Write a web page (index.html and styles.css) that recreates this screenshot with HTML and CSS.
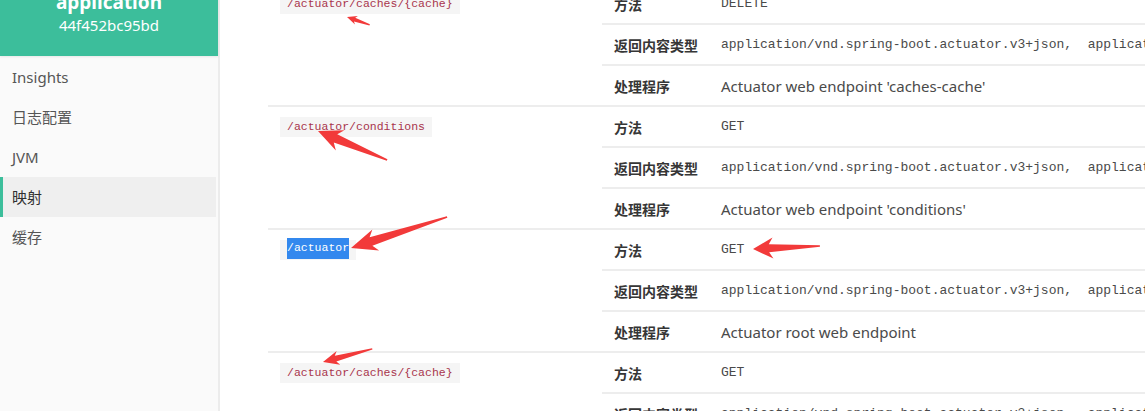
FILE: index.html
```html
<!DOCTYPE html>
<html lang="zh">
<head>
<meta charset="utf-8">
<title>映射</title>
<link rel="stylesheet" href="styles.css">
</head>
<body>
<div class="app">
  <aside class="sidebar">
    <div class="sidebar-header">
      <div class="app-name">application</div>
      <div class="app-id">44f452bc95bd</div>
    </div>
    <nav class="nav">
      <a class="nav-item">Insights</a>
      <a class="nav-item">日志配置</a>
      <a class="nav-item">JVM</a>
      <a class="nav-item is-active">映射</a>
      <a class="nav-item">缓存</a>
    </nav>
  </aside>
  <main class="main">
    <table class="mappings">
      <tbody>
        <tr>
          <td class="path" rowspan="3"><code class="pill">/actuator/caches/{cache}</code></td>
          <th class="label">方法</th>
          <td class="value mono">DELETE</td>
        </tr>
        <tr>
          <th class="label">返回内容类型</th>
          <td class="value mono">application/vnd.spring-boot.actuator.v3+json,&nbsp; application/json</td>
        </tr>
        <tr>
          <th class="label">处理程序</th>
          <td class="value">Actuator web endpoint 'caches-cache'</td>
        </tr>

        <tr>
          <td class="path" rowspan="3"><code class="pill">/actuator/conditions</code></td>
          <th class="label">方法</th>
          <td class="value mono">GET</td>
        </tr>
        <tr>
          <th class="label">返回内容类型</th>
          <td class="value mono">application/vnd.spring-boot.actuator.v3+json,&nbsp; application/json</td>
        </tr>
        <tr>
          <th class="label">处理程序</th>
          <td class="value">Actuator web endpoint 'conditions'</td>
        </tr>

        <tr>
          <td class="path" rowspan="3"><code class="pill"><span class="selected">/actuator</span></code></td>
          <th class="label">方法</th>
          <td class="value mono">GET</td>
        </tr>
        <tr>
          <th class="label">返回内容类型</th>
          <td class="value mono">application/vnd.spring-boot.actuator.v3+json,&nbsp; application/json</td>
        </tr>
        <tr>
          <th class="label">处理程序</th>
          <td class="value">Actuator root web endpoint</td>
        </tr>

        <tr>
          <td class="path" rowspan="3"><code class="pill">/actuator/caches/{cache}</code></td>
          <th class="label">方法</th>
          <td class="value mono">GET</td>
        </tr>
        <tr>
          <th class="label">返回内容类型</th>
          <td class="value mono">application/vnd.spring-boot.actuator.v3+json,&nbsp; application/json</td>
        </tr>
        <tr>
          <th class="label">处理程序</th>
          <td class="value">Actuator web endpoint 'caches'</td>
        </tr>
      </tbody>
    </table>
  </main>
</div>
<svg class="annotations" width="1145" height="411" viewBox="0 0 1145 411" aria-hidden="true">
  <g fill="#f23a3a">
    <polygon transform="translate(347,17) rotate(19)" points="0,0 10,-4.5 8,-2 24,-0.7 24,0.7 8,2 10,4.5"/>
    <polygon transform="translate(318,131) rotate(22.8)" points="0,0 24,-11 19,-4.5 75,-0.8 75,0.8 19,4.5 24,11"/>
    <polygon transform="translate(351,248) rotate(-17.9)" points="0,0 26,-11 21,-4.5 101,-0.8 101,0.8 21,4.5 26,11"/>
    <polygon transform="translate(323,362) rotate(-14.9)" points="0,0 16,-7 13,-3 51,-0.7 51,0.7 13,3 16,7"/>
    <polygon transform="translate(753,249) rotate(-2.6)" points="0,0 20,-10.5 16,-4 67,-0.8 67,0.8 16,4 20,10.5"/>
  </g>
</svg>
</body>
</html>
```

FILE: styles.css
```css
html, body {
  margin: 0;
  padding: 0;
  background: #ffffff;
  overflow: hidden;
}

body {
  position: relative;
  width: 1145px;
  height: 411px;
  font-family: "Noto Sans", "Noto Sans CJK SC", sans-serif;
  color: #4a4a4a;
}

.app {
  display: flex;
  height: 411px;
}

.sidebar {
  flex: 0 0 218px;
  background: #fafafa;
  border-right: 2px solid #ececec;
}

.sidebar-header {
  margin-top: -30px;
  padding: 20px 0 20px;
  background: #3cbe9b;
  color: #ffffff;
  text-align: center;
  box-shadow: 0 1px 2px rgba(0, 0, 0, 0.08);
}

.app-name {
  font-size: 19px;
  line-height: 24px;
  font-weight: 700;
}

.app-id {
  font-size: 15px;
  line-height: 22px;
}

.nav {
  display: flex;
  flex-direction: column;
  padding-top: 1px;
}

.nav-item {
  display: block;
  height: 40px;
  line-height: 40px;
  padding-left: 12px;
  font-family: "Noto Sans", "Noto Sans CJK SC", sans-serif;
  font-size: 15px;
  color: #555555;
  border-left: 3px solid transparent;
  text-indent: -3px;
}

.nav-item.is-active {
  background: #efefef;
  border-left-color: #3cbe9b;
  color: #303030;
  margin-right: 2px;
}

.main {
  flex: 1 1 auto;
  min-width: 0;
  overflow: hidden;
  padding-left: 48px;
}

.mappings {
  margin-top: -18px;
  border-collapse: separate;
  border-spacing: 0;
  width: 1000px;
  table-layout: fixed;
}

.mappings td,
.mappings th {
  border-top: 2px solid #ededed;
  height: 39px;
  padding: 0 12px;
  white-space: nowrap;
  vertical-align: middle;
}

.mappings .path {
  width: 310px;
  vertical-align: top;
  padding-top: 10px;
  line-height: 20px;
}

.mappings .label {
  width: 83px;
  text-align: left;
  font-family: "Noto Sans CJK SC", sans-serif;
  font-size: 14px;
  font-weight: 700;
  color: #363636;
}

.mappings .value {
  font-size: 15px;
  color: #4a4a4a;
  overflow: hidden;
}

.mappings .value.mono {
  font-family: "Liberation Mono", "Noto Sans CJK SC", monospace;
  font-size: 13px;
  color: #4a4a4a;
}

.pill {
  display: inline-block;
  vertical-align: top;
  background: #f5f5f5;
  color: #a8344c;
  font-family: "Liberation Mono", monospace;
  font-size: 11.5px;
  line-height: 20px;
  padding: 0 7px;
}

.selected {
  background: #3388ee;
  color: #ffffff;
  display: inline-block;
  vertical-align: top;
  line-height: 20px;
  margin-top: -2px;
  padding-bottom: 1px;
}

.annotations {
  position: absolute;
  left: 0;
  top: 0;
  pointer-events: none;
}
```
